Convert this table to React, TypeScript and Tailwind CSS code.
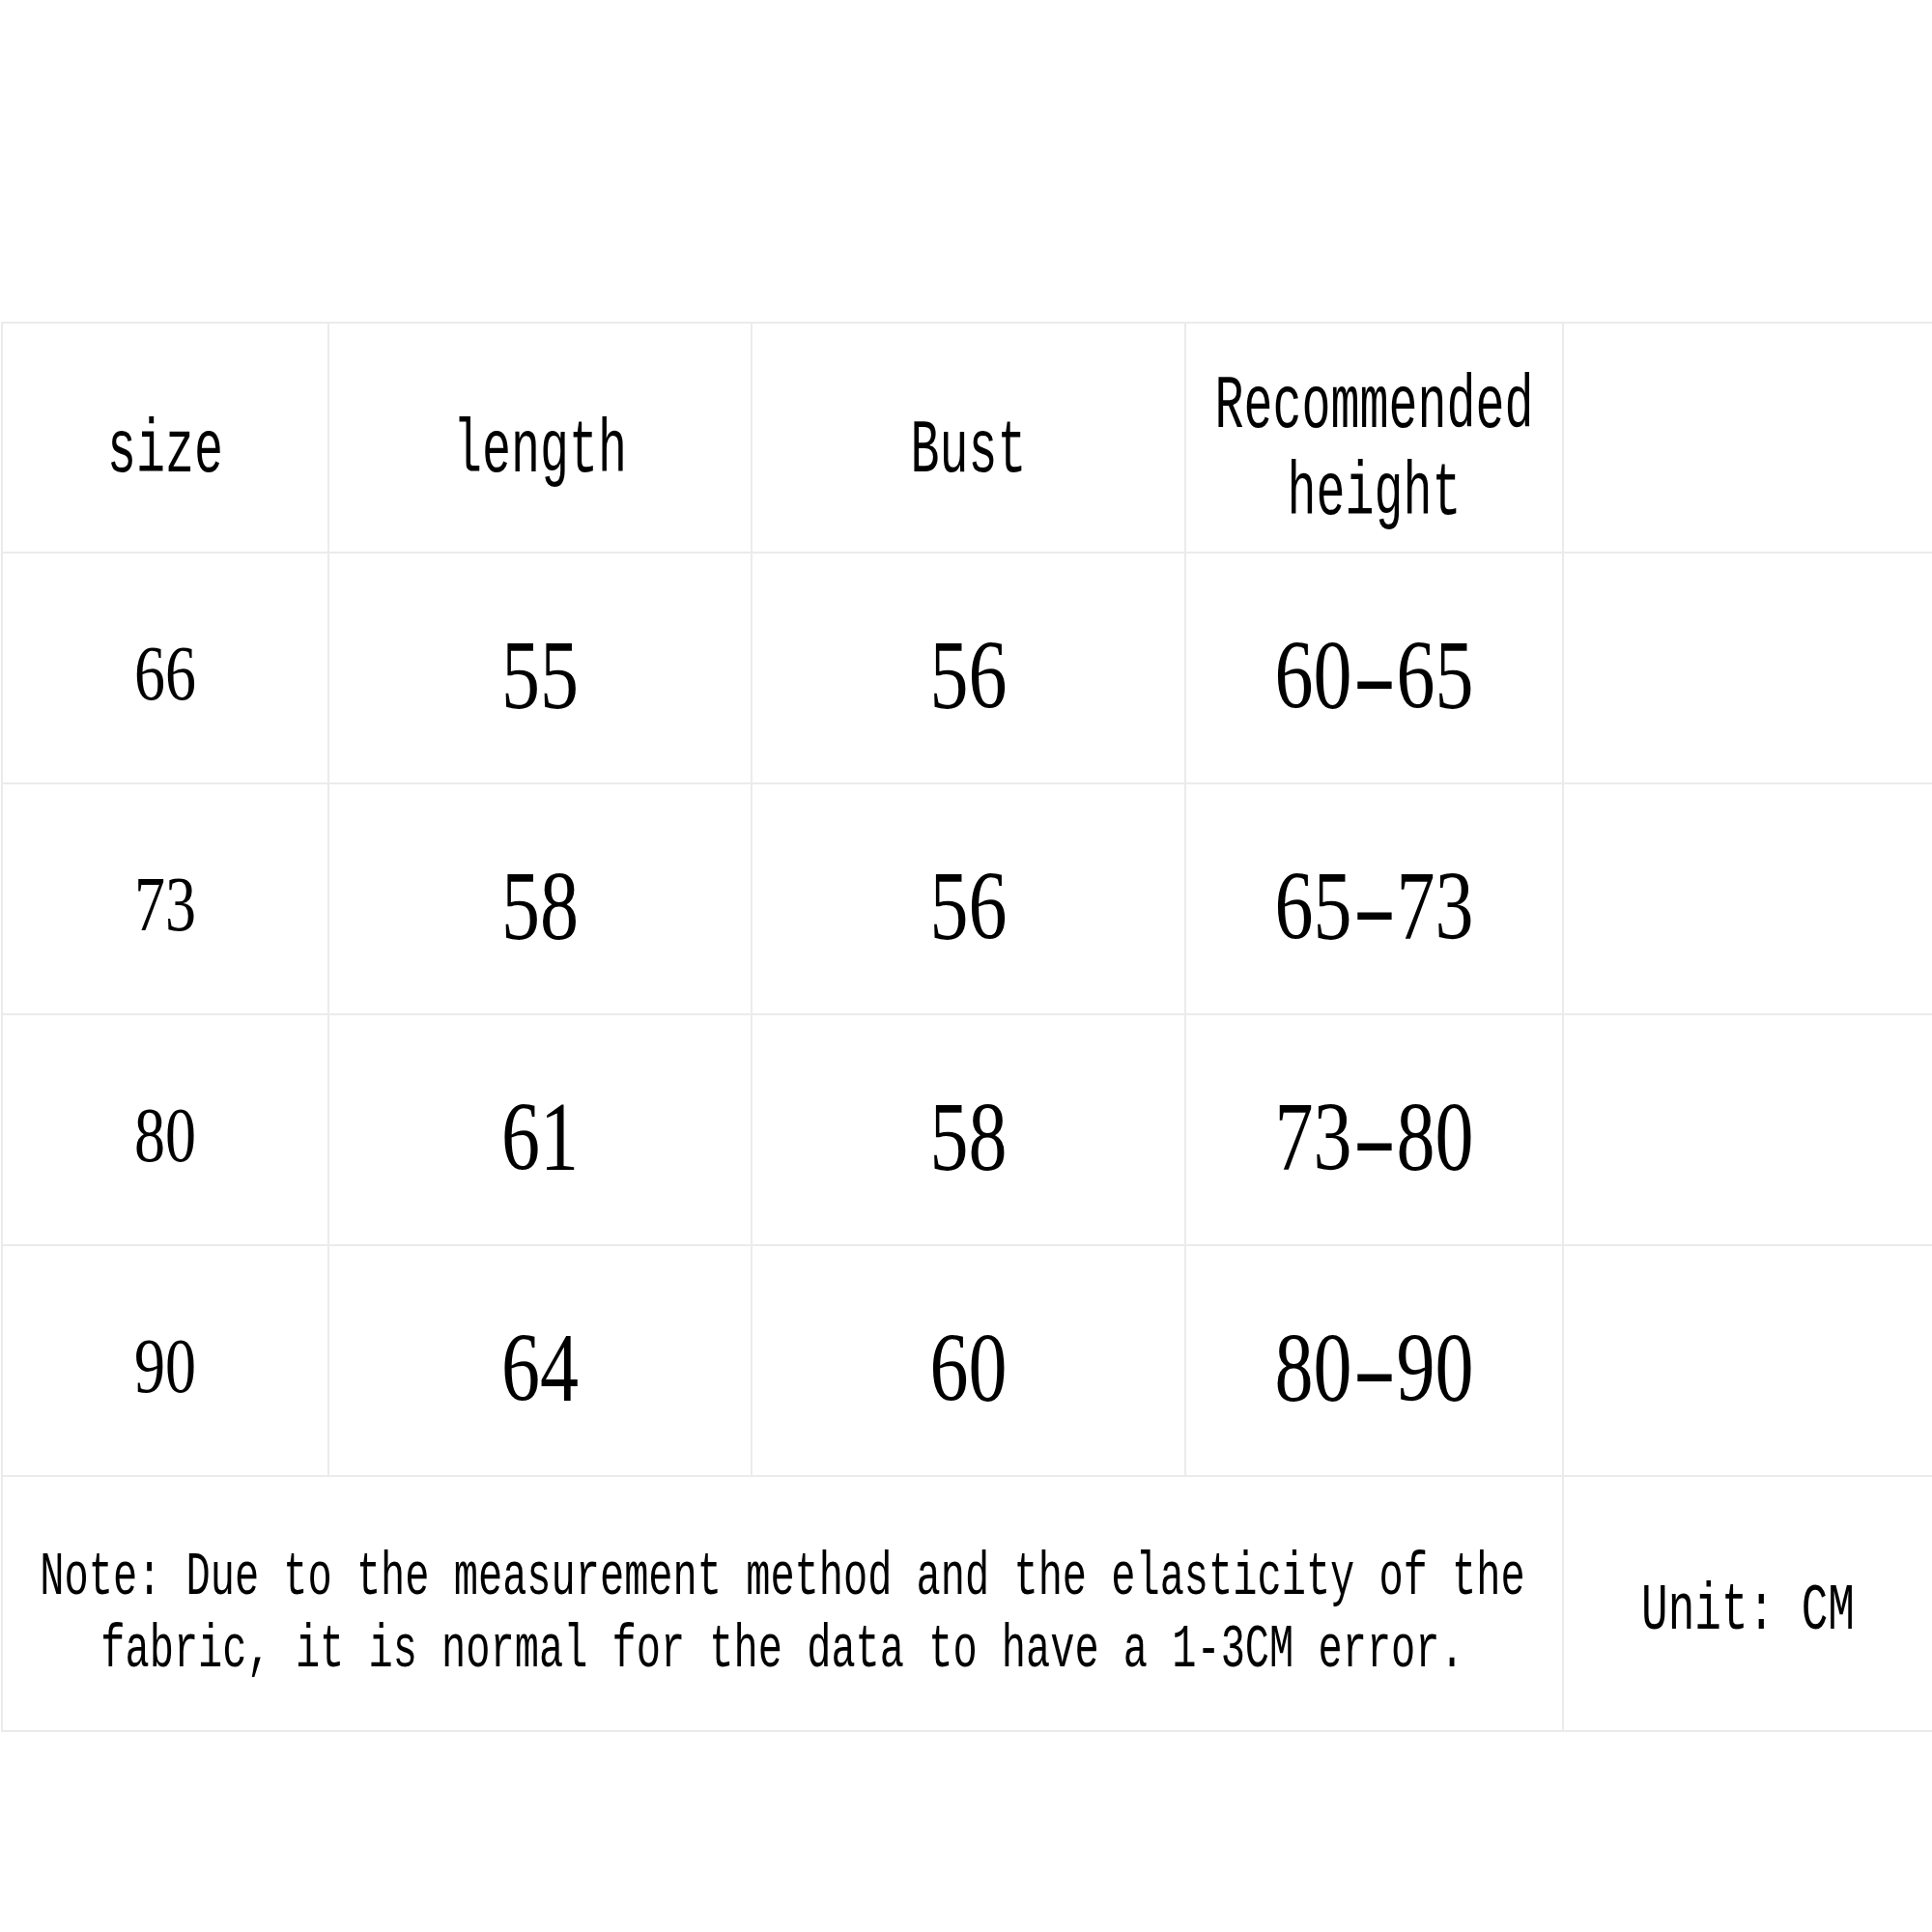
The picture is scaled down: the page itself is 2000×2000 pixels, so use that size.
const headers = ["size", "length", "Bust"];

const rows = [
  { size: "66", length: "55", bust: "56", height: ["60", "65"] },
  { size: "73", length: "58", bust: "56", height: ["65", "73"] },
  { size: "80", length: "61", bust: "58", height: ["73", "80"] },
  { size: "90", length: "64", bust: "60", height: ["80", "90"] },
];

const mono = "font-['Liberation_Mono',monospace] text-black";
const serif = "font-['Liberation_Serif',serif] text-black";
const cell = "flex items-center justify-center border-r-2 border-b-2 border-[#ebebeb]";

export default function App() {
  return (
    <div className="w-[2000px] h-[2000px] bg-white overflow-hidden pt-[333px] pl-[1px]">
      <div className="grid grid-cols-[338px_438px_449px_391px_1fr] border-t-2 border-l-2 border-[#ebebeb]">
        {/* Header */}
        {headers.map((h) => (
          <div key={h} className={`${cell} h-[238px]`}>
            <span className={`${mono} text-[50px] leading-none scale-y-[1.55] translate-y-[15px]`}>{h}</span>
          </div>
        ))}
        <div className={`${cell} h-[238px]`}>
          <span className={`${mono} text-[50px] leading-[58px] text-center scale-y-[1.55] translate-y-[14px]`}>
            Recommended
            <br />
            height
          </span>
        </div>
        <div className="h-[238px] border-b-2 border-[#ebebeb]" />

        {/* Data rows */}
        {rows.map((r) => (
          <div key={r.size} className="contents">
            <div className={`${cell} h-[239px]`}>
              <span className={`${serif} text-[64px] leading-none scale-y-[1.24] translate-y-[6px]`}>{r.size}</span>
            </div>
            <div className={`${cell} h-[239px]`}>
              <span className={`${serif} text-[80px] leading-none scale-y-[1.28] translate-y-[6px]`}>{r.length}</span>
            </div>
            <div className={`${cell} h-[239px]`}>
              <span className={`${serif} text-[80px] leading-none scale-y-[1.28] translate-y-[6px]`}>{r.bust}</span>
            </div>
            <div className={`${cell} h-[239px]`}>
              <span className={`${serif} text-[80px] leading-none scale-y-[1.28] translate-y-[6px] flex items-center`}>
                {r.height[0]}
                <span className="inline-block w-[46px] text-center scale-x-[1.7]">-</span>
                {r.height[1]}
              </span>
            </div>
            <div className="h-[239px] border-b-2 border-[#ebebeb]" />
          </div>
        ))}

        {/* Note row */}
        <div className={`${cell} col-span-4 h-[264px]`}>
          <p className={`${mono} text-[42px] leading-[50px] text-center scale-y-[1.5] translate-y-[11px]`}>
            Note: Due to the measurement method and the elasticity of the
            <br />
            fabric, it is normal for the data to have a 1-3CM error.
          </p>
        </div>
        <div className="h-[264px] border-b-2 border-[#ebebeb] flex items-center justify-center">
          <span className={`${mono} text-[46px] leading-none scale-y-[1.5] translate-y-[8px]`}>Unit: CM</span>
        </div>
      </div>
    </div>
  );
}
